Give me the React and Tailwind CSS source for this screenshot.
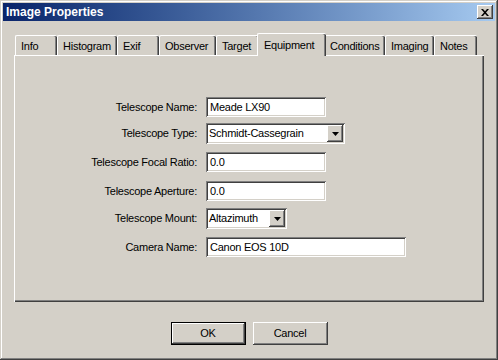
import React from "react";

const raised =
  "shadow-[inset_-1px_-1px_#404040,inset_1px_1px_#ffffff,inset_-2px_-2px_#808080,inset_2px_2px_#d4d0c8]";
const sunken =
  "shadow-[inset_1px_1px_#808080,inset_-1px_-1px_#ffffff,inset_2px_2px_#404040,inset_-2px_-2px_#d4d0c8]";

const tabs = [
  { name: "Info", w: "w-[42px]" },
  { name: "Histogram", w: "w-[60px]" },
  { name: "Exif", w: "w-[42px]" },
  { name: "Observer", w: "w-[57px]" },
  { name: "Target", w: "w-[43px]" },
  { name: "Equipment", w: "w-[65px]", active: true },
  { name: "Conditions", w: "w-[61px]" },
  { name: "Imaging", w: "w-[49px]" },
  { name: "Notes", w: "w-[43px]" },
];

function Tab({ tab }) {
  if (tab.active) {
    return (
      <div className="relative z-10 -mx-[2px] mb-[-1px] h-[23px] w-[69px] rounded-t-[2px] border-l border-t border-white bg-[#d4d0c8] shadow-[inset_-1px_0_#404040,inset_-2px_0_#808080] flex items-start pl-[6px] pt-[3px]">
        {tab.name}
      </div>
    );
  }
  return (
    <div
      className={`${tab.w} h-[20px] rounded-t-[2px] border-l border-t border-white bg-[#d4d0c8] shadow-[inset_-1px_0_#404040,inset_-2px_0_#808080] flex items-center pl-[5px] pt-[1px]`}
    >
      {tab.name}
    </div>
  );
}

function TextBox({ value, w }) {
  return (
    <div className={`${w} h-[20px] bg-white ${sunken} flex items-center pl-[4px]`}>
      {value}
    </div>
  );
}

function Combo({ value, w }) {
  return (
    <div className={`${w} h-[21px] bg-white ${sunken} flex items-center justify-between pl-[3px] pr-[2px]`}>
      <span>{value}</span>
      <div className={`w-[16px] h-[17px] bg-[#d4d0c8] ${raised} flex items-center justify-center`}>
        <svg width="7" height="4" viewBox="0 0 7 4">
          <path d="M0 0H7L3.5 4Z" fill="#000" />
        </svg>
      </div>
    </div>
  );
}

function Row({ label, children, mt }) {
  return (
    <div className={`flex items-center ${mt}`}>
      <div className="w-[183px] text-right pr-[1px]">{label}</div>
      <div className="ml-[8px]">{children}</div>
    </div>
  );
}

export default function App() {
  return (
    <div
      className="w-[498px] h-[360px] bg-[#d4d0c8] p-[3px] flex flex-col text-[11px] tracking-[-0.25px] text-black shadow-[inset_-1px_-1px_#404040,inset_1px_1px_#d4d0c8,inset_-2px_-2px_#808080,inset_2px_2px_#ffffff]"
      style={{ fontFamily: "Tahoma, 'Liberation Sans', Arial, sans-serif" }}
    >
      <div className="h-[18px] bg-gradient-to-r from-[#0a246a] to-[#a6caf0] flex items-center justify-between pl-[3px] pr-[2px]">
        <span className="text-white font-bold text-[12px] tracking-normal leading-none">Image Properties</span>
        <div className={`w-[16px] h-[14px] bg-[#d4d0c8] ${raised} flex items-center justify-center`}>
          <svg width="8" height="7" viewBox="0 0 8 7">
            <path d="M0 0H2L4 2.2L6 0H8L5 3.5L8 7H6L4 4.8L2 7H0L3 3.5Z" fill="#000" />
          </svg>
        </div>
      </div>

      <div className="ml-[11px] mr-[11px] mt-[12px] flex flex-col">
        <div className="flex items-end pl-[1px] h-[22px]">
          {tabs.map((t) => (
            <Tab key={t.name} tab={t} />
          ))}
        </div>
        <div className="h-[247px] bg-[#d4d0c8] border-l border-t border-white shadow-[inset_-1px_-1px_#404040,inset_-2px_-2px_#808080] flex flex-col pt-[41px]">
          <Row label="Telescope Name:">
            <TextBox value="Meade LX90" w="w-[120px]" />
          </Row>
          <Row label="Telescope Type:" mt="mt-[6px]">
            <Combo value="Schmidt-Cassegrain" w="w-[139px]" />
          </Row>
          <Row label="Telescope Focal Ratio:" mt="mt-[8px]">
            <TextBox value="0.0" w="w-[120px]" />
          </Row>
          <Row label="Telescope Aperture:" mt="mt-[9px]">
            <TextBox value="0.0" w="w-[120px]" />
          </Row>
          <Row label="Telescope Mount:" mt="mt-[7px]">
            <Combo value="Altazimuth" w="w-[81px]" />
          </Row>
          <Row label="Camera Name:" mt="mt-[8px]">
            <TextBox value="Canon EOS 10D" w="w-[200px]" />
          </Row>
        </div>
      </div>

      <div className="flex justify-center gap-[7px] mt-[20px]">
        <div className="w-[75px] h-[23px] border border-black">
          <div className={`w-full h-full bg-[#d4d0c8] ${raised} flex items-center justify-center`}>OK</div>
        </div>
        <div className={`w-[75px] h-[23px] bg-[#d4d0c8] ${raised} flex items-center justify-center`}>Cancel</div>
      </div>
    </div>
  );
}
